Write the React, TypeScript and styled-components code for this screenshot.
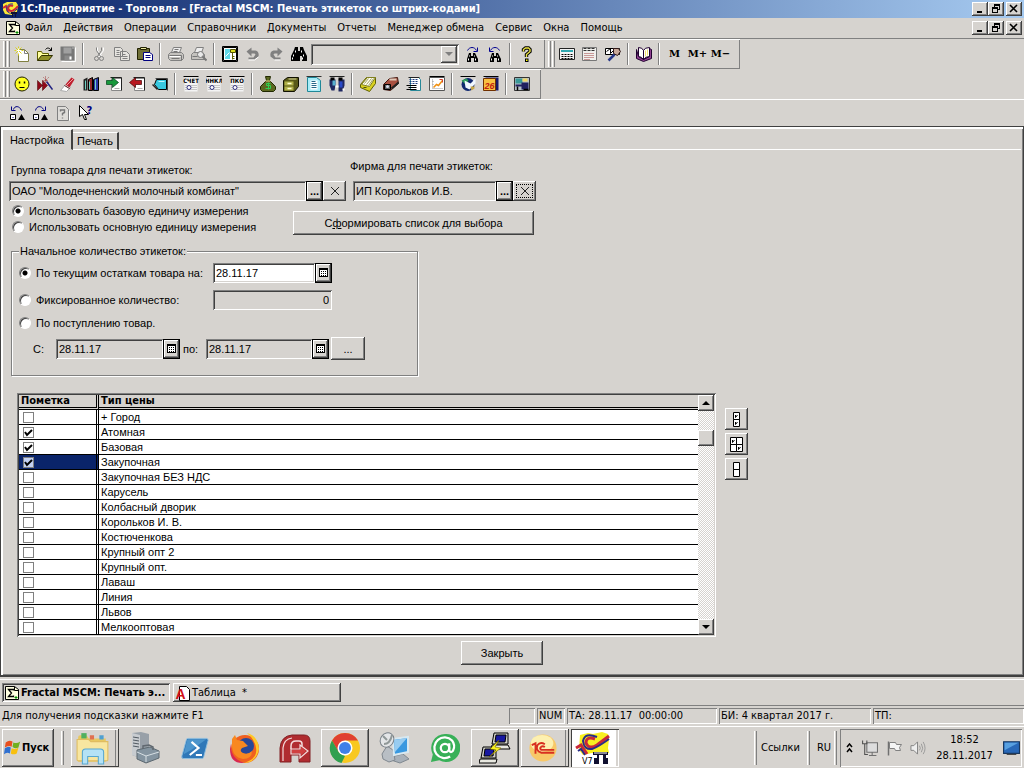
import React from "react";
import styled, { createGlobalStyle, css } from "styled-components";

const face = "#d6d3cf";
const shade = "#808080";
const dark = "#404040";
const uiFont = '"DejaVu Sans Condensed", "DejaVu Sans", sans-serif';
const formFont = '"Liberation Sans", Arial, sans-serif';

const raised = css`
  box-shadow: inset -1px -1px ${dark}, inset 1px 1px #fff, inset -2px -2px ${shade};
`;
const sunken = css`
  box-shadow: inset 1px 1px ${shade}, inset -1px -1px #fff, inset 2px 2px ${dark}, inset -2px -2px ${face};
`;
const thinSunken = css`
  box-shadow: inset 1px 1px ${shade}, inset -1px -1px #fff;
`;

const GlobalStyle = createGlobalStyle`
  * { box-sizing: border-box; }
  body { margin: 0; background: ${face}; color: #000; font: 11px/14px ${uiFont}; }
  button, input { font: inherit; color: inherit; margin: 0; padding: 0; border: 0; border-radius: 0; background: none; }
  svg { display: block; flex: none; }
`;

const Screen = styled.div`
  display: flex;
  flex-direction: column;
  min-height: 100vh;
`;

/* ---------- title and menu ---------- */

const TitleBar = styled.header`
  display: flex;
  align-items: center;
  height: 18px;
  padding: 0 2px;
  gap: 1px;
  background: linear-gradient(90deg, #0a246a, #a6caf0);
  color: #fff;
`;
const Title = styled.h1`
  flex: 1;
  margin: 0;
  font: bold 11px/16px ${uiFont};
  white-space: pre;
`;
const Captions = styled.div`
  display: flex;
`;
const CaptionButton = styled.button<{ $apart?: boolean }>`
  display: grid;
  place-items: center;
  width: 16px;
  height: 14px;
  margin-left: ${(p) => (p.$apart ? 2 : 0)}px;
  background: ${face};
  ${raised}
`;
const MenuBar = styled.nav`
  display: flex;
  align-items: center;
  height: 21px;
  padding: 0 2px 0 5px;
  border-bottom: 1px solid ${shade};
`;
const MenuItems = styled.div`
  display: flex;
  flex: 1;
  gap: 11px;
  padding-left: 4px;
`;
const MenuItem = styled.button`
  white-space: nowrap;
`;

/* ---------- toolbars ---------- */

const ToolRow = styled.div`
  display: flex;
`;
const ToolBar = styled.div`
  display: flex;
  align-items: center;
  height: 30px;
  padding: 0 8px 0 3px;
  box-shadow: inset 0 1px #fff, inset -1px -1px ${shade};
`;
const PlainBar = styled.div`
  display: flex;
  align-items: center;
  height: 27px;
  padding-left: 5px;
  border-top: 1px solid #fff;
`;
const Grip = styled.span`
  width: 7px;
  height: 26px;
  background: linear-gradient(90deg, #fff 1px, ${face} 1px 2px, ${shade} 2px 3px, ${face} 3px 4px, #fff 4px 5px, ${face} 5px 6px, ${shade} 6px);
`;
const ToolButton = styled.button`
  display: grid;
  place-items: center;
  width: 23px;
  height: 23px;
`;
const MemoryButton = styled(ToolButton)`
  font: bold 10px/14px "DejaVu Serif", serif;
  white-space: nowrap;
`;
const Divider = styled.span`
  width: 2px;
  height: 22px;
  margin: 0 3px;
  border-left: 1px solid ${shade};
  border-right: 1px solid #fff;
`;
const SearchCombo = styled.div`
  display: flex;
  width: 148px;
  height: 21px;
  margin: 0 1px;
  padding: 2px;
  ${sunken}
`;
const SearchInput = styled.input`
  flex: 1;
  min-width: 0;
`;
const DropButton = styled.button`
  display: grid;
  place-items: center;
  width: 16px;
  ${raised}
`;

/* ---------- document window ---------- */

const Panel = styled.main`
  display: flex;
  flex-direction: column;
  flex: 1;
  padding: 1px 2px 2px 2px;
  font: 11px/14px ${formFont};
  border: solid ${dark};
  border-width: 1px 1px 2px 1px;
  box-shadow: inset 2px 2px #fff, inset -1px -1px ${shade};
`;
const Tabs = styled.div`
  display: flex;
  align-items: flex-end;
  height: 22px;
`;
const Tab = styled.button<{ $active?: boolean }>`
  height: ${(p) => (p.$active ? 21 : 18)}px;
  width: ${(p) => (p.$active ? 70 : 46)}px;
  text-align: center;
  border-right: 2px solid ${dark};
  border-bottom: 1px solid ${(p) => (p.$active ? "transparent" : "#fff")};
  border-top: 1px solid #fff;
  white-space: nowrap;
`;
const TabRule = styled.span`
  flex: 1;
  border-bottom: 1px solid #fff;
`;
const Body = styled.div`
  display: flex;
  flex-direction: column;
  flex: 1;
  padding: 8px 6px;
`;
const Pickers = styled.div`
  display: flex;
  align-items: flex-end;
  gap: 4px;
`;
const Picker = styled.div<{ $w: number; $gap: number }>`
  display: flex;
  flex-direction: column;
  gap: ${(p) => p.$gap}px;
  width: ${(p) => p.$w}px;
`;
const Label = styled.label<{ $inset?: number }>`
  padding-left: ${(p) => p.$inset ?? 0}px;
  line-height: 16px;
  white-space: nowrap;
`;
const FieldRow = styled.div<{ $lead?: number }>`
  display: flex;
  height: 20px;
  padding-left: ${(p) => p.$lead ?? 0}px;
`;
const Field = styled.input<{ $white?: boolean; $right?: boolean }>`
  flex: 1;
  min-width: 0;
  padding: 0 3px;
  text-align: ${(p) => (p.$right ? "right" : "left")};
  background: ${(p) => (p.$white ? "#fff" : face)};
  ${sunken}
`;
const DotsButton = styled.button`
  width: 17px;
  font-weight: bold;
  border: 1px solid #000;
  ${raised}
`;
const PickButton = styled.button`
  display: grid;
  place-items: center;
  width: 17px;
  border: 1px solid #000;
  ${raised}
`;
const ClearButton = styled.button<{ $focus?: boolean }>`
  display: grid;
  place-items: center;
  width: 23px;
  padding: 2px;
  ${raised}
  outline: ${(p) => (p.$focus ? "1px dotted #000" : "none")};
  outline-offset: -4px;
`;
const PushButton = styled.button<{ $w: number; $h: number }>`
  width: ${(p) => p.$w}px;
  height: ${(p) => p.$h}px;
  ${raised}
`;
const UnitRow = styled.div`
  display: flex;
  align-items: flex-end;
  padding: 2px 0 0 3px;
`;
const Units = styled.div`
  display: flex;
  flex-direction: column;
  width: 281px;
`;
const Choice = styled.label`
  display: flex;
  align-items: center;
  gap: 5px;
  height: 16px;
  white-space: nowrap;
`;
const Radio = styled.input.attrs({ type: "radio" })`
  appearance: none;
  flex: none;
  width: 12px;
  height: 12px;
  border: 1px solid;
  border-color: ${shade} #fff #fff ${shade};
  border-radius: 50%;
  background: #fff;
  box-shadow: inset 1px 1px ${dark};
  &:checked {
    background: radial-gradient(circle, #000 2px, #fff 3px);
  }
`;
const Group = styled.fieldset`
  width: 407px;
  margin: 9px 2px 0;
  padding: 1px 7px 15px;
  border: 1px solid ${shade};
  box-shadow: 1px 1px #fff, inset 1px 1px #fff;
`;
const Legend = styled.legend`
  padding: 0 1px;
  line-height: 14px;
  background: ${face};
`;
const QuantityRow = styled.div`
  display: grid;
  grid-template-columns: 194px 119px;
  align-items: center;
  height: 27px;
`;
const ArrivalRow = styled.div`
  padding: 2px 0 6px;
`;
const PeriodRow = styled.div`
  display: flex;
  align-items: center;
  gap: 2px;
  padding-left: 13px;
`;
const PeriodWord = styled.label`
  width: 22px;
  padding-left: 1px;
`;
const DateField = styled(FieldRow)<{ $w: number }>`
  width: ${(p) => p.$w}px;
`;

/* ---------- price table ---------- */

const Prices = styled.div`
  display: flex;
  gap: 9px;
  padding: 17px 0 0 8px;
`;
const PriceFrame = styled.div`
  display: flex;
  flex: 0 1 699px;
  padding: 2px;
  background: #fff;
  ${sunken}
`;
const PriceTable = styled.table`
  flex: 1;
  border-collapse: separate;
  border-spacing: 0;
  table-layout: fixed;
`;
const HeadCell = styled.th<{ $mark?: boolean }>`
  width: ${(p) => (p.$mark ? "80px" : "auto")};
  height: 15px;
  padding: 0 2px;
  text-align: left;
  font: bold 11px/12px ${uiFont};
  background: ${face};
  border-right: ${(p) => (p.$mark ? "3px double #000" : "0")};
  border-bottom: 3px double #000;
`;
const MarkCell = styled.td<{ $current?: boolean }>`
  height: 15px;
  padding: 0 4px;
  background: ${(p) => (p.$current ? "#0a246a" : "#fff")};
  border-right: 3px double #000;
  border-bottom: 1px solid #000;
`;
const NameCell = styled.td`
  height: 15px;
  padding: 0 2px;
  line-height: 13px;
  border-bottom: 1px solid #000;
`;
const Tick = styled.input.attrs({ type: "checkbox" })<{ $current?: boolean }>`
  appearance: none;
  display: block;
  width: 11px;
  height: 11px;
  border: 1px solid ${shade};
  background: ${(p) => (p.$current ? "#c4d2f4" : "#fff")};
  &:not(:checked) + svg {
    display: none;
  }
`;
const TickBox = styled.span`
  position: relative;
  display: block;
  width: 11px;
  svg {
    position: absolute;
    inset: 0;
    pointer-events: none;
  }
`;
const ScrollTrack = styled.div`
  display: flex;
  flex-direction: column;
  width: 16px;
  background: repeating-conic-gradient(#fff 0 25%, ${face} 0 50%) 0 0 / 2px 2px;
`;
const ScrollButton = styled.button`
  display: grid;
  place-items: center;
  width: 16px;
  height: 16px;
  background: ${face};
  ${raised}
`;
const ScrollGap = styled.span<{ $grow: number }>`
  flex: ${(p) => p.$grow};
`;
const SideButtons = styled.div`
  display: flex;
  flex-direction: column;
  gap: 3px;
  padding-top: 15px;
`;
const SideButton = styled.button`
  display: grid;
  place-items: center;
  width: 23px;
  height: 22px;
  ${raised}
`;
const Footer = styled.div`
  display: flex;
  justify-content: center;
  padding: 4px 20px 0 0;
`;

/* ---------- window list and status bar ---------- */

const WindowBar = styled.div`
  display: flex;
  gap: 3px;
  height: 27px;
  margin-top: 2px;
  padding: 3px 2px;
  border-top: 1px solid #fff;
  border-bottom: 1px solid ${shade};
`;
const WindowButton = styled.button<{ $active?: boolean }>`
  display: flex;
  align-items: center;
  gap: 1px;
  width: 168px;
  padding-left: 2px;
  white-space: pre;
  font-weight: ${(p) => (p.$active ? "bold" : "normal")};
  ${(p) => (p.$active ? sunken : raised)}
`;
const StatusBar = styled.div`
  display: flex;
  align-items: center;
  gap: 2px;
  height: 20px;
`;
const Hint = styled.span`
  flex: 1;
  padding-left: 2px;
`;
const StatusCell = styled.span<{ $w: number }>`
  width: ${(p) => p.$w}px;
  height: 16px;
  padding: 1px 2px;
  white-space: pre;
  ${thinSunken}
`;

/* ---------- system task bar ---------- */

const TaskBar = styled.footer`
  display: flex;
  align-items: center;
  height: 42px;
  padding: 1px 2px 1px;
  border-top: 1px solid #fff;
`;
const StartButton = styled.button`
  display: flex;
  align-items: center;
  gap: 1px;
  width: 52px;
  height: 38px;
  padding-left: 2px;
  font-weight: bold;
  ${raised}
`;
const TaskGrip = styled.span<{ $gap: number }>`
  width: 3px;
  height: 34px;
  margin: 0 ${(p) => p.$gap}px;
  border-left: 1px solid #fff;
  border-right: 1px solid ${shade};
`;
const Apps = styled.div`
  display: flex;
  flex: 1;
  gap: 2px;
`;
const AppButton = styled.button<{ $state?: "open" | "stack" | "active" }>`
  display: grid;
  place-items: center;
  width: 48px;
  height: 38px;
  ${(p) => p.$state === "open" && raised}
  ${(p) =>
    p.$state === "stack" &&
    css`
      padding-right: 5px;
      box-shadow: inset -1px -1px ${dark}, inset 1px 1px #fff, inset -3px 0 ${face}, inset -4px 0 ${shade};
    `}
  ${(p) =>
    p.$state === "active" &&
    css`
      padding-right: 4px;
      box-shadow: inset 1px 1px ${dark}, inset -1px -1px #fff, inset -3px 0 ${face};
      background: #fff;
    `}
`;
const TrayWord = styled.span`
  white-space: nowrap;
`;
const Tray = styled.div`
  display: flex;
  align-items: center;
  gap: 8px;
  width: 182px;
  height: 38px;
  padding: 0 2px 0 6px;
  ${thinSunken}
`;
const Clock = styled.time`
  flex: 1;
  text-align: center;
  line-height: 16px;
  white-space: nowrap;
`;

/* ---------- icons ---------- */

/* Small 16-unit icons are shifted by half a unit so that 1px strokes stay sharp. */
const Px = ({ children, s = 16, v = 16 }: { children: React.ReactNode; s?: number; v?: number }) => (
  <svg width={s} height={s} viewBox={`0 0 ${v} ${v}`} aria-hidden>
    {v === 16 ? <g transform="translate(0.5 0.5)">{children}</g> : children}
  </svg>
);

const Logo = () => (
  <Px s={17} v={17}>
    <path d="M1 3l4-2h9l2 3-1 7-5 3-7-1-2-4z" fill="#f8e838" />
    <path d="M1 7l3-2 2 6M11 5C7 3 5 7 7 9s5 1 9-4" fill="none" stroke="#d02838" strokeWidth="2" />
    <path d="M11 3C5 2 3 8 6 11s6 0 9-3" fill="none" stroke="#303890" />
    <path d="M9 11h6v2h-1v3h-1v-3h-2v3h-1v-3H9z" fill="#101030" />
  </Px>
);
const SigmaDoc = () => (
  <Px>
    <path d="M1 1h9l4 3v10H1z" fill="#ffffe0" stroke="#000" />
    <path d="M10 1v4h4" fill="none" stroke="#000" />
    <path d="M9 5V4H4l3 3.500L4 11h5v-1" fill="none" stroke="#000" strokeWidth="1.300" />
    <path d="M10 12h3M11.500 10.500v3" stroke="#080" />
  </Px>
);
const icons: Record<string, React.ReactNode> = {
  newDoc: (
    <>
      <path d="M4 3h6l4 4v8H4z" fill="#fff" stroke="#808040" />
      <path d="M10 3v4h4" fill="none" stroke="#808080" />
      <path d="M4 0v9M0 4h9M1 1l6 6M7 1L1 7" stroke="#d8d020" />
      <path d="M4 2v5M2 4h5" stroke="#fff" />
    </>
  ),
  open: (
    <>
      <path d="M0 14V5h4l1 2h6v3" fill="#ffffa0" stroke="#606000" />
      <path d="M0 14l4-5h11l-4 5z" fill="#909028" stroke="#303000" />
      <path d="M8 3c2-2.500 4-1.500 6 1M14 1v3h-3" fill="none" stroke="#000" />
    </>
  ),
  save: (
    <>
      <path d="M0 0h14v14H0z" fill="#777" />
      <path d="M3 1h8v6H3z" fill="#a0a0a0" />
      <path d="M4 9h7v5H4z" fill="#8a8a8a" />
      <path d="M9 10h2v3H9zM12 1h1v1h-1z" fill="#fff" />
      <path d="M1 15h14V1" stroke="#fff" fill="none" />
    </>
  ),
  cut: (
    <>
      <path d="M6 1v3l5 7M12 1v3l-5 7" stroke="#fff" fill="none" />
      <path d="M5 1v3l4 6M10 1v3L6 10" fill="none" stroke="#808080" />
      <circle cx="5" cy="12" r="2" fill="none" stroke="#808080" />
      <circle cx="10" cy="12" r="2" fill="none" stroke="#808080" />
    </>
  ),
  copy: (
    <>
      <path d="M0 1h6l2 2v7H0zM6 5h6l3 3v6H6z" fill="#e6e4e0" stroke="#808080" />
      <path d="M2 4h3M2 6h3M2 8h3M8 8h3M8 10h5M8 12h5" stroke="#808080" />
    </>
  ),
  paste: (
    <>
      <path d="M0 2h12v11H0z" fill="#707038" stroke="#202000" />
      <path d="M3 3h6V1H3z" fill="#e8e8a0" stroke="#202000" />
      <path d="M6 6h6l3 2v6H6z" fill="#fff" stroke="#000080" />
      <path d="M8 9h5M8 11h5" stroke="#000080" />
    </>
  ),
  print: (
    <>
      <path d="M5 1h8l-2 5H3z" fill="#eee" stroke="#808080" />
      <path d="M2 6h11l2 2v4l-2 2H2l-2-2V8z" fill="#c4c2be" stroke="#808080" />
      <path d="M1 9h12v5M3 12h8M6 3h4M5 5h4" fill="none" stroke="#777" />
      <path d="M1 10h11" stroke="#fff" />
    </>
  ),
  preview: (
    <>
      <path d="M5 1h7l-2 5H3z" fill="#eee" stroke="#808080" />
      <path d="M2 6h9l2 2v5H0V8z" fill="#c4c2be" stroke="#808080" />
      <circle cx="9" cy="8" r="3" fill="#e8e8e8" stroke="#777" />
      <path d="M11 10l4 4" stroke="#777" strokeWidth="2" />
      <path d="M1 10h5" stroke="#777" />
    </>
  ),
  key: (
    <>
      <path d="M0 0h15v15H0z" fill="#fff" stroke="#000" />
      <path d="M1 1h13v13H1z" fill="none" stroke="#000" />
      <path d="M2.500 2.500h5v10h-5z" fill="#60d8e8" />
      <path d="M8 3h5v3H8z" fill="#e0e020" stroke="#505000" />
      <path d="M10 6v7M10 10h2M10 12h2" stroke="#606000" />
      <path d="M3 10l4-4" stroke="#fff" />
    </>
  ),
  undo: (
    <>
      <path d="M1 5l5-4v3h4q4 1 3 6l-4 3H3v-2h5l2-3-1-1H6v3z" fill="#808080" />
      <path d="M3 13.500h6l4-3" fill="none" stroke="#fff" />
    </>
  ),
  redo: (
    <>
      <path d="M14 5L9 1v3H5Q1 5 2 10l4 3h6v-2H7L5 8l1-1h3v3z" fill="#808080" />
      <path d="M6 13.500h6" stroke="#fff" />
    </>
  ),
  find: (
    <>
      <path d="M3.500.5h3v4h2v-4h3l1 3 3 6v5h-5v-5h-2v5h-5-4v-5l3-6z" fill="#000" />
      <path d="M4 4v2M2 8v2M10 4v2M12 8v2M1 11v2M11 11v2" stroke="#fff" />
    </>
  ),
  findNext: (
    <>
      <path d="M4.500 6.500h2v3h2v-3h2l3 6v3h-4v-4h-3v4h-4v-3z" fill="#000" />
      <path d="M5 9v1M10 9v1M4 12v2M11 12v2" stroke="#fff" />
      <path d="M3 4c2-4 7-4 9 0M13 1v4H9" fill="none" stroke="#000090" />
    </>
  ),
  findPrev: (
    <>
      <path d="M4.500 6.500h2v3h2v-3h2l3 6v3h-4v-4h-3v4h-4v-3z" fill="#000" />
      <path d="M5 9v1M10 9v1M4 12v2M11 12v2" stroke="#fff" />
      <path d="M12 4C10 0 5 0 3 4M2 1v4h4" fill="none" stroke="#000090" />
    </>
  ),
  help: (
    <>
      <path d="M5 5V3l2-1.500h3L11.500 3v2L8 8v2.500" fill="none" stroke="#000" strokeWidth="3.400" />
      <path d="M5 5V3l2-1.500h3L11.500 3v2L8 8v2.500" fill="none" stroke="#e8e040" strokeWidth="1.400" />
      <path d="M6.500 12h3.500v3.500H6.500z" fill="#000" />
      <path d="M7.500 13h1.500v1.500H7.500z" fill="#ff0" />
    </>
  ),
  calc: (
    <>
      <path d="M0 2h15v11H0z" fill="#f4f4f4" stroke="#222" />
      <path d="M1.500 3.500h12v2h-12z" fill="#30a8b0" />
      <path d="M2 8h12M2 10h12M2 12h12" stroke="#000" strokeDasharray="2 1" />
    </>
  ),
  calendar: (
    <>
      <path d="M0 1h14v13H0z" fill="#f0efec" stroke="#777" />
      <path d="M1 2h12M1 4h12" stroke="#333" strokeDasharray="3 1" />
      <path d="M2 7h10M2 9h10M2 11h10M2 13h6" stroke="#a04040" strokeDasharray="1 1" />
    </>
  ),
  inspect: (
    <>
      <path d="M0 2h14v6H0z" fill="#fff" stroke="#000" />
      <path d="M1 5l4-3v5l4-4" fill="none" stroke="#000" />
      <path d="M8 2h5l2 3-3 4-4-2z" fill="#c8a898" stroke="#301818" />
      <path d="M3 14l6-6" stroke="#283888" strokeWidth="2.500" />
    </>
  ),
  book: (
    <>
      <path d="M0 3v9l7 3 8-3V3l-2-1v8l-6 3-5-3z" fill="#904090" stroke="#200030" />
      <path d="M2 1q4 0 5 3v9q-2-3-5-3zM7 4q1-3 6-3v9q-4 0-6 3z" fill="#fff" stroke="#200030" />
      <path d="M9 4v6M11 3v6" stroke="#f0e070" />
    </>
  ),
  smile: (
    <>
      <circle cx="7.500" cy="7.500" r="7" fill="#ffff20" stroke="#202000" />
      <path d="M5 5v2M10 5v2" stroke="#000" strokeWidth="1.500" />
      <path d="M5 11h5" stroke="#000" />
    </>
  ),
  wand: (
    <>
      <path d="M0 4l5 5-5 5zM5 4l5 5-5 5z" fill="#900818" stroke="#400" strokeWidth=".5" />
      <path d="M9 5l6 8" stroke="#202080" strokeWidth="1.500" />
      <path d="M8 0v7M5 4h6M6 1l5 5M11 1L6 6" stroke="#a04040" strokeDasharray="1 1" />
    </>
  ),
  marker: (
    <>
      <path d="M0 14l5-6 5 3-4 4z" fill="#fff" stroke="#aaa" />
      <path d="M5 8l6-7 3 2-5 8z" fill="#c02030" />
      <path d="M6 9l7-7" stroke="#f0a0a0" />
      <path d="M4 9l5 3" stroke="#501010" />
    </>
  ),
  books: (
    <>
      <path d="M0 3l4-2v13H0z" fill="#222" />
      <path d="M5 3l4-2v13H5z" fill="#902828" stroke="#000" />
      <path d="M10 3l5-2v13h-5z" fill="#2838a8" stroke="#000" />
      <path d="M2 4v9M6 5v8M12 3v10" stroke="#70d0c0" />
    </>
  ),
  docIn: (
    <>
      <path d="M5 2h10v12H5z" fill="#fff" stroke="#888" />
      <path d="M15 1v13M4 1h11" stroke="#222" />
      <path d="M0 4h6V1l6 5-6 5V8H0z" fill="#18983c" stroke="#004018" strokeWidth=".7" />
      <path d="M8 12h5" stroke="#aaa" />
    </>
  ),
  docOut: (
    <>
      <path d="M5 2h10v12H5z" fill="#fff" stroke="#888" />
      <path d="M15 1v13M4 1h11" stroke="#222" />
      <path d="M12 4H6V1L0 6l6 5V8h6z" fill="#b81820" stroke="#400" strokeWidth=".7" />
      <path d="M8 12h5" stroke="#aaa" />
    </>
  ),
  shape: (
    <>
      <path d="M4 3h10v10H6L2 8z" fill="#38c8e0" stroke="#000" />
      <path d="M6 5h6" stroke="#c0f4ff" />
      <path d="M0 8l5 5" stroke="#222" strokeWidth="1.500" />
      <path d="M3 2h12v12" fill="none" stroke="#444" />
    </>
  ),
  bag: (
    <>
      <path d="M5 0h5L9 4l6 6v3l-2 2H2l-2-2v-3l6-6z" fill="#5c6820" stroke="#202800" />
      <path d="M10 7H6v2h4v3H5M8 6v7" fill="none" stroke="#30d050" />
      <path d="M5 4.500h5" stroke="#e0d080" />
    </>
  ),
  safe: (
    <>
      <path d="M0 4l4-3h11v9l-4 5H0z" fill="#585818" stroke="#101000" />
      <path d="M1 5h9v4H1zM1 10h9v4H1z" fill="#b0b048" />
      <path d="M4 7h4M4 12h4" stroke="#ffffd0" strokeWidth="1.500" />
      <path d="M5 2.500h8" stroke="#e0e0a0" />
    </>
  ),
  cyanDoc: (
    <>
      <path d="M1 1h9l4 3v11H1z" fill="#a8ecf8" stroke="#208898" />
      <path d="M4 4h7v9H4z" fill="#fff" />
      <path d="M5 5h4M5 7h5M5 9h5M5 11h5" stroke="#286888" />
      <path d="M0 0h15" stroke="#333" />
    </>
  ),
  people: (
    <>
      <path d="M0 3h6v6l-1 5H2L0 9zM9 3h6v6l-2 6H9z" fill="#202860" />
      <path d="M1 1h4v3H1zM9 1h4v3H9z" fill="#000" />
      <path d="M3 4h3v5H3z" fill="#58b0d0" />
      <path d="M10 5h3v6h-3z" fill="#2848c8" />
      <path d="M6 9h3v2H6zM13 12h2v2h-2z" fill="#fff" />
      <path d="M0 0h15" stroke="#222" />
    </>
  ),
  yellowBox: (
    <>
      <path d="M0 8l6-7h9v6l-6 8-9-4z" fill="#d8d020" stroke="#606000" />
      <path d="M1 8l6-7h8L9 10z" fill="#fffff0" stroke="#808020" />
      <path d="M4 7l4-5M6 8l5-6M8 9l5-7" stroke="#a0a060" />
      <path d="M3 11h3" stroke="#505010" />
    </>
  ),
  train: (
    <>
      <path d="M0 8l6-6 8-1 1 6-8 7-7-1z" fill="#a85040" stroke="#401810" />
      <path d="M1 8h6v5H1z" fill="#606060" stroke="#000" />
      <path d="M6 3l7 0" stroke="#e0c8b8" strokeWidth="2" />
      <path d="M8 12l7-6" stroke="#222" strokeWidth="2" />
      <circle cx="4" cy="10" r="1.500" fill="#d8e0f0" />
    </>
  ),
  report: (
    <>
      <path d="M4 1h8l2 2v11H4z" fill="#fff" stroke="#288898" />
      <path d="M3 3h8M3 5h8M3 7h8" stroke="#204080" strokeDasharray="2 1" />
      <path d="M0 9h10M2 11h8M0 13h10" stroke="#000" />
      <path d="M2 1h11" stroke="#222" />
    </>
  ),
  chart: (
    <>
      <path d="M0 1h15v13H0z" fill="#fff" stroke="#555" />
      <path d="M0 0h15" stroke="#000" />
      <path d="M3 3v9h10M3 5h2M3 8h2" fill="none" stroke="#999" strokeDasharray="1 1" />
      <path d="M4 11l3-3 2 1 4-5" fill="none" stroke="#f09010" strokeWidth="1.500" />
      <path d="M10 3h3v3" fill="none" stroke="#d04030" />
    </>
  ),
  globe: (
    <>
      <path d="M0 0h15" stroke="#000" />
      <circle cx="7.500" cy="8" r="6.500" fill="#102870" />
      <path d="M1 4l5-2 2 2-3 4z" fill="#289858" />
      <path d="M4 4l6 3 5-5v5l-6 6-4-2z" fill="#f0f8ff" />
      <path d="M10 10h4v2l-3 2z" fill="#c8a848" />
    </>
  ),
  day26: (
    <>
      <path d="M2 1h13v13H2z" fill="#181868" />
      <path d="M0 2h12v12H0z" fill="#f8c040" stroke="#703000" />
      <path d="M0 0h15" stroke="#000" />
      <text x="1" y="12" fontSize="9" fontWeight="bold" fontStyle="italic" fill="#c02010" fontFamily="Liberation Sans">26</text>
    </>
  ),
  desk: (
    <>
      <path d="M0 1h15v13H0z" fill="#b8c0c8" stroke="#333" />
      <path d="M1 2h7v5H1z" fill="#389898" />
      <path d="M8 2h5v3H8z" fill="#f0d868" />
      <path d="M7 6h7v7H7zM1 8h6v2H1z" fill="#202060" />
      <path d="M3 10v4M9 13h5" stroke="#000" strokeWidth="1.500" />
    </>
  ),
  question: (
    <>
      <path d="M2 1h8l3 3v11H2z" fill="#dedcd8" stroke="#808080" />
      <path d="M5 6V4.500h4V7L7 8v2M7 12v1" fill="none" stroke="#777" strokeWidth="1.400" />
      <path d="M14 5v10" fill="none" stroke="#fff" />
    </>
  ),
  whatsThis: (
    <>
      <path d="M1 0v11l3-2 2 5h2L6 9h4z" fill="#fff" stroke="#000" />
      <text x="8" y="8" fontSize="10" fontWeight="bold" fill="#000080" fontFamily="DejaVu Sans">?</text>
    </>
  ),
  expand: (
    <>
      <path d="M1 9h5v5H1z" fill="#fff" stroke="#000" />
      <path d="M12 8.500l3.500 6H8.500z" fill="#000" />
      <path d="M12 5C10 0 5 0 4 4M2 1v4h4M3 12h1" fill="none" stroke="#000080" />
    </>
  ),
  collapse: (
    <>
      <path d="M1 9h5v5H1z" fill="#fff" stroke="#000" />
      <path d="M12 8.500l3.500 6H8.500z" fill="#000" />
      <path d="M3 5C4 0 9 0 11 4M13 1v4H9M3 12h1" fill="none" stroke="#000080" />
    </>
  ),
};

const FormIcon = ({ word }: { word: string }) => (
  <Px>
    <path d="M1 1h13v14H1z" fill="#f4f4f4" />
    <path d="M0 0h15" stroke="#000" />
    <text x="7.500" y="6" textAnchor="middle" fontSize="6" fontWeight="bold" fontFamily="DejaVu Sans Condensed">{word}</text>
    <path d="M2 9h11M2 11h11M2 13h11" stroke="#999" strokeDasharray="1 1" />
    <circle cx="5.500" cy="11" r="2" fill="#fff" stroke="#303080" />
  </Px>
);

const Tool = ({ name, label }: { name: string; label: string }) => (
  <ToolButton aria-label={label}>
    <Px>{icons[name]}</Px>
  </ToolButton>
);

const CaptionSet = () => (
  <Captions>
    <CaptionButton aria-label="Свернуть">
      <svg width="10" height="10" shapeRendering="crispEdges"><path d="M2 7h5v2H2z" /></svg>
    </CaptionButton>
    <CaptionButton aria-label="Восстановить">
      <svg width="10" height="10" shapeRendering="crispEdges"><path d="M3 0h6v6H7V5h1V2H4v1H3zM1 3h6v6H1zM2 5v3h4V5z" fillRule="evenodd" /></svg>
    </CaptionButton>
    <CaptionButton $apart aria-label="Закрыть окно">
      <svg width="10" height="10"><path d="M1 1l7 7M8 1L1 8" stroke="#000" strokeWidth="1.600" /></svg>
    </CaptionButton>
  </Captions>
);

const Cross = () => (
  <svg width="10" height="10"><path d="M1 1l8 8M9 1L1 9" stroke="#222" /></svg>
);
const Grid = () => (
  <svg width="11" height="11" shapeRendering="crispEdges">
    <path d="M1 1h9v9H1z" fill="#fff" />
    <path d="M1 1h9v9H1zM2 3v6h7V3z" fillRule="evenodd" />
    <path d="M3 4h1v1H3zM5 4h1v1H5zM7 4h1v1H7zM3 6h1v1H3zM5 6h1v1H5zM7 6h1v1H7zM3 8h1v1H3zM5 8h1v1H5zM7 8h1v1H7z" />
  </svg>
);

const DateBox = ({ id, width, white, label }: { id: string; width: number; white?: boolean; label?: string }) => (
  <DateField $w={width}>
    <Field id={id} $white={white} defaultValue="28.11.17" aria-label={label} />
    <PickButton aria-label="Выбрать дату"><Grid /></PickButton>
  </DateField>
);

const MarkGlyph = ({ columns, checks }: { columns: number; checks: string }) => (
  <svg width={columns * 6 + 2} height="15">
    {Array.from({ length: columns }, (_, c) => (
      <path key={c} d={`M${c * 6 + 0.5} .5h6v7h-6zM${c * 6 + 0.5} 7.500h6v7h-6z`} fill="#fff" stroke="#000" />
    ))}
    <path d={checks} fill="none" stroke="#000" />
  </svg>
);

const prices: [string, boolean][] = [
  ["+ Город", false],
  ["Атомная", true],
  ["Базовая", true],
  ["Закупочная", true],
  ["Закупочная БЕЗ НДС", false],
  ["Карусель", false],
  ["Колбасный дворик", false],
  ["Корольков И. В.", false],
  ["Костюченкова", false],
  ["Крупный опт 2", false],
  ["Крупный опт.", false],
  ["Лаваш", false],
  ["Линия", false],
  ["Львов", false],
  ["Мелкооптовая", false],
];
const menu = ["Файл", "Действия", "Операции", "Справочники", "Документы", "Отчеты", "Менеджер обмена", "Сервис", "Окна", "Помощь"];

/* ---------- application icons of the task bar ---------- */

const WindowsFlag = () => (
  <Px s={17} v={20}>
    <path d="M2 4q4-3 8-1L9 9Q5 7 1 10z" fill="#e85020" />
    <path d="M11 4q4 2 8-1l-2 7q-4 2-7-1z" fill="#70b020" />
    <path d="M1 11q4-3 7-1l-1 7q-4-2-7 1z" fill="#3070d0" />
    <path d="M9 11q4 2 8-1l-2 7q-4 2-7 0z" fill="#f8c010" />
  </Px>
);
const Explorer = () => (
  <Px s={34} v={32}>
    <path d="M2 6q0-2 2-2h6l2 3h16v22H2z" fill="#e8c860" />
    <path d="M5 2h5v5H5z" fill="#50b060" /><path d="M13 4h4v4h-4z" fill="#e07050" /><path d="M22 4h4v4h-4z" fill="#50a0d0" />
    <path d="M1 8h11l2 2h16v17q0 1-1 1H2q-1 0-1-1z" fill="#f8e6a0" stroke="#e0bc60" />
    <path d="M6 31V20q0-3 3-3h14q3 0 3 3v11h-5v-7H11v7z" fill="#b4e2f6" stroke="#58a8d0" />
  </Px>
);
const Server = () => (
  <Px s={32} v={32}>
    <path d="M3 1l9-1 8 2v20l-9 4-8-3z" fill="#98a0a8" />
    <path d="M3 1l8 2v23l-8-3z" fill="#c8ccd0" />
    <path d="M4 5l6 1M4 8l6 1M4 11l6 1M4 14l6 1" stroke="#505860" />
    <path d="M8 18l13-3 9 4v7l-13 5-9-4z" fill="#8494a0" stroke="#5c6870" />
    <path d="M8 20l9 4 13-4M17 24v6" fill="none" stroke="#d8e0e4" />
    <path d="M14 17v-3l6-1 4 2v3" fill="none" stroke="#606870" strokeWidth="1.500" />
  </Px>
);
const PowerShell = () => (
  <Px s={28} v={32}>
    <path d="M8 5h21q2 0 2 2l-5 19q0 2-2 2H3q-3 0-2-3L6 7q0-2 2-2z" fill="#3078b8" stroke="#90c0e0" />
    <path d="M8 6h21L12 18l-9 5L7 7z" fill="#60a8d8" opacity=".6" />
    <path d="M12 9l8 7-10 8M17 24h7" fill="none" stroke="#fff" strokeWidth="2.500" />
  </Px>
);
const Firefox = () => (
  <Px s={32} v={32}>
    <circle cx="16" cy="17" r="14" fill="#f06020" />
    <path d="M18 1q11 3 12 16-3 14-15 14 14-4 12-15-1-8-9-15z" fill="#ffc828" />
    <circle cx="17" cy="14" r="8" fill="#284898" />
    <path d="M3 7l3-4 2 5 6 1 5 5-6 2q-3 3 1 5 5 2 9-2 0 8-9 8Q3 25 3 13z" fill="#f88820" />
    <path d="M2 12q-1 14 13 19Q1 32 1 17z" fill="#d82850" />
  </Px>
);
const RedA = () => (
  <Px s={32} v={32}>
    <path d="M1 30V16Q2 4 13 3h12q6 0 6 6v21H20v-7h-8v7z" fill="#b02c30" stroke="#802024" />
    <path d="M12 17v-3q0-5 5-5h3q3 0 3 3v2" fill="none" stroke="#f4dcdc" strokeWidth="1.500" />
    <path d="M4 29V16Q5 7 13 6M12 17h9v-4l8 6-8 7v-4h-9z" fill="none" stroke="#f4dcdc" strokeWidth="1.200" />
    <path d="M13 18h9v-3l5 4-5 4v-2h-9z" fill="#d04040" />
  </Px>
);
const Chrome = () => (
  <Px s={32} v={32}>
    <circle cx="16" cy="16" r="15" fill="#f8c820" />
    <path d="M3 8.500A15 15 0 0 1 29 8.500H16L9.500 20z" fill="#e04030" />
    <path d="M3 8.500l7 12 6 3.500-3.500 7A15 15 0 0 1 3 8.500z" fill="#30a050" />
    <circle cx="16" cy="16" r="7.500" fill="#fff" /><circle cx="16" cy="16" r="6" fill="#4080e8" />
  </Px>
);
const Remote = () => (
  <Px s={32} v={32}>
    <path d="M16 24l8-2 6 5-9 4-9-3z" fill="#a8b0b8" stroke="#808890" />
    <path d="M3 22l5-8 6 4 2 10-6 2-6-3z" fill="#b8bec4" stroke="#808890" />
    <path d="M14 7l15-2v15l-14 3z" fill="#3898e0" stroke="#d8e8f0" strokeWidth="2" />
    <path d="M15 8l13-2-12 14z" fill="#98ccf0" />
    <ellipse cx="8" cy="8" rx="6.500" ry="7.500" fill="#e4e6e8" stroke="#788088" transform="rotate(35 8 8)" />
    <path d="M5 12q6 0 8-9M8 8l-4-4" fill="none" stroke="#909898" strokeWidth="2" />
  </Px>
);
const AtMail = () => (
  <Px s={30} v={32}>
    <path d="M16 1a15 15 0 1 1-6 28L1 31l2-8A15 15 0 0 1 16 1z" fill="#38b058" />
    <circle cx="16" cy="16" r="4.500" fill="none" stroke="#fff" strokeWidth="2.400" />
    <path d="M20.500 11v7q1 4 4 1 3-6-1-11a11 11 0 1 0-2 17" fill="none" stroke="#fff" strokeWidth="2.400" />
  </Px>
);
const Putty = () => (
  <Px s={32} v={32}>
    <path d="M15 1h14v11H13zM4 15h13v11H2z" fill="#d0d0c8" stroke="#000" />
    <path d="M17 3h10l-1 7H16zM6 17h9l-1 7H5z" fill="#1818a0" stroke="#000" />
    <path d="M13 13h16l2 4H12zM1 27h17l-1 4H0z" fill="#e8e8e0" stroke="#000" />
    <path d="M20 8l-9 9 6 1-7 7 12-9-6-1z" fill="#f8f020" stroke="#706000" strokeWidth=".6" />
  </Px>
);
const OneC = () => (
  <Px s={30} v={32}>
    <circle cx="16" cy="16" r="14.500" fill="#f8c868" /><ellipse cx="15" cy="11" rx="12" ry="9" fill="#fdf0b0" />
    <path d="M4 13l4-2v11M18 12q-5-3-8 1-2 6 4 8h14M18 15q-3-2-5 1 0 2 2 2h13" fill="none" stroke="#d83020" strokeWidth="2" />
  </Px>
);
const OneC7 = () => (
  <svg width="36" height="34" viewBox="0 0 36 34" aria-hidden>
    <path d="M5 4l8-2 5 1 9-2 6 2 1 5-1 9 1 5-9 1-8-1-9 2-4-5z" fill="#f8f020" />
    <path d="M1 17l5-3 6 9M20 8q-9-3-9 4 3 7 11 2L34 5" fill="none" stroke="#c82838" strokeWidth="3" />
    <path d="M22 6q-12-5-14 4 1 9 9 8 6-2 17-10M3 20l3-2 4 6" fill="none" stroke="#282c88" strokeWidth="2" />
    <path d="M18 21h15v3h-2v3h2v6h-5v-9h-4v9h-5v-6h3v-3h-4z" fill="#101030" />
    <path d="M19 22h13" stroke="#fff" />
    <text x="7" y="33" fontSize="8" fontFamily="DejaVu Sans">V7</text>
  </svg>
);

export default function App() {
  return (
    <Screen>
      <GlobalStyle />
      <TitleBar>
        <Logo />
        <Title>1С:Предприятие - Торговля - [Fractal MSCM: Печать этикеток со штрих-кодами]</Title>
        <CaptionSet />
      </TitleBar>
      <MenuBar>
        <SigmaDoc />
        <MenuItems>{menu.map((m) => <MenuItem key={m}>{m}</MenuItem>)}</MenuItems>
        <CaptionSet />
      </MenuBar>

      <ToolRow>
        <ToolBar>
          <Grip />
          <Tool name="newDoc" label="Новый" />
          <Tool name="open" label="Открыть" />
          <Tool name="save" label="Сохранить" />
          <Divider />
          <Tool name="cut" label="Вырезать" />
          <Tool name="copy" label="Копировать" />
          <Tool name="paste" label="Вставить" />
          <Divider />
          <Tool name="print" label="Печать" />
          <Tool name="preview" label="Просмотр" />
          <Divider />
          <Tool name="key" label="Параметры" />
          <Tool name="undo" label="Отменить" />
          <Tool name="redo" label="Вернуть" />
          <Tool name="find" label="Найти" />
          <SearchCombo>
            <SearchInput aria-label="Строка поиска" />
            <DropButton aria-label="Показать список">
              <svg width="8" height="5"><path d="M0 0h8L4 4z" fill="#808080" /></svg>
            </DropButton>
          </SearchCombo>
          <Tool name="findNext" label="Найти далее" />
          <Tool name="findPrev" label="Найти ранее" />
          <Divider />
          <Tool name="help" label="Помощь" />
        </ToolBar>
        <ToolBar>
          <Grip />
          <Tool name="calc" label="Калькулятор" />
          <Tool name="calendar" label="Календарь" />
          <Tool name="inspect" label="Табло" />
          <Divider />
          <Tool name="book" label="Описание" />
          <Divider />
          <MemoryButton>M</MemoryButton>
          <MemoryButton>M+</MemoryButton>
          <MemoryButton>M−</MemoryButton>
        </ToolBar>
      </ToolRow>
      <ToolRow>
        <ToolBar>
          <Grip />
          <Tool name="smile" label="Советы" />
          <Tool name="wand" label="Быстрый старт" />
          <Tool name="marker" label="Пометка" />
          <Tool name="books" label="Журналы" />
          <Tool name="docIn" label="Приход" />
          <Tool name="docOut" label="Расход" />
          <Tool name="shape" label="Возврат" />
          <Divider />
          <ToolButton aria-label="Счет"><FormIcon word="СЧЕТ" /></ToolButton>
          <ToolButton aria-label="Накладная"><FormIcon word="ННКЛ" /></ToolButton>
          <ToolButton aria-label="Кассовый ордер"><FormIcon word="ПКО" /></ToolButton>
          <Divider />
          <Tool name="bag" label="Деньги" />
          <Tool name="safe" label="Касса" />
          <Tool name="cyanDoc" label="Документ" />
          <Tool name="people" label="Контрагенты" />
          <Divider />
          <Tool name="yellowBox" label="Товары" />
          <Tool name="train" label="Поставки" />
          <Tool name="report" label="Отчет" />
          <Tool name="chart" label="График" />
          <Divider />
          <Tool name="globe" label="Интернет" />
          <Tool name="day26" label="Дата" />
          <Divider />
          <Tool name="desk" label="Рабочее место" />
        </ToolBar>
      </ToolRow>
      <PlainBar>
        <Tool name="expand" label="Развернуть" />
        <Tool name="collapse" label="Свернуть" />
        <Tool name="question" label="Описание формы" />
        <Tool name="whatsThis" label="Что это" />
      </PlainBar>

      <Panel>
        <Tabs role="tablist">
          <Tab role="tab" aria-selected $active>Настройка</Tab>
          <Tab role="tab" aria-selected={false}>Печать</Tab>
          <TabRule />
        </Tabs>
        <Body>
          <Pickers>
            <Picker $w={337} $gap={3}>
              <Label $inset={2} htmlFor="goods">Группа товара для печати этикеток:</Label>
              <FieldRow>
                <Field id="goods" defaultValue={'ОАО "Молодечненский молочный комбинат"'} />
                <DotsButton>...</DotsButton>
                <ClearButton aria-label="Очистить группу"><Cross /></ClearButton>
              </FieldRow>
            </Picker>
            <Picker $w={186} $gap={7}>
              <Label htmlFor="firm">Фирма для печати этикеток:</Label>
              <FieldRow $lead={3}>
                <Field id="firm" defaultValue="ИП Корольков И.В." />
                <DotsButton>...</DotsButton>
                <ClearButton $focus aria-label="Очистить фирму"><Cross /></ClearButton>
              </FieldRow>
            </Picker>
          </Pickers>
          <UnitRow>
            <Units>
              <Choice><Radio name="unit" defaultChecked />Использовать базовую единичу измерения</Choice>
              <Choice><Radio name="unit" />Использовать основную единицу измерения</Choice>
            </Units>
            <PushButton $w={241} $h={24}>С<u>ф</u>ормировать список для выбора</PushButton>
          </UnitRow>

          <Group>
            <Legend>Начальное количество этикеток:</Legend>
            <QuantityRow>
              <Choice><Radio name="qty" defaultChecked />По текущим остаткам товара на:</Choice>
              <DateBox id="rest" width={119} white label="Дата остатков" />
            </QuantityRow>
            <QuantityRow>
              <Choice><Radio name="qty" />Фиксированное количество:</Choice>
              <FieldRow><Field $right defaultValue="0" aria-label="Количество" /></FieldRow>
            </QuantityRow>
            <ArrivalRow>
              <Choice><Radio name="qty" />По поступлению товар.</Choice>
            </ArrivalRow>
            <PeriodRow>
              <PeriodWord htmlFor="from">С:</PeriodWord>
              <DateBox id="from" width={124} />
              <PeriodWord htmlFor="to">по:</PeriodWord>
              <DateBox id="to" width={123} />
              <PushButton $w={34} $h={23}>...</PushButton>
            </PeriodRow>
          </Group>

          <Prices>
            <PriceFrame>
              <PriceTable>
                <thead>
                  <tr><HeadCell $mark>Пометка</HeadCell><HeadCell>Тип цены</HeadCell></tr>
                </thead>
                <tbody>
                  {prices.map(([name, on], i) => (
                    <tr key={name}>
                      <MarkCell $current={i === 3}>
                        <TickBox>
                          <Tick defaultChecked={on} $current={i === 3} aria-label={name} />
                          <svg width="11" height="11"><path d="M2 5l2 3 5-5" fill="none" stroke="#000" strokeWidth="2" /></svg>
                        </TickBox>
                      </MarkCell>
                      <NameCell>{name}</NameCell>
                    </tr>
                  ))}
                </tbody>
              </PriceTable>
              <ScrollTrack>
                <ScrollButton aria-label="Вверх"><svg width="8" height="4"><path d="M0 4h8L4 0z" /></svg></ScrollButton>
                <ScrollGap $grow={1} />
                <ScrollButton aria-label="Ползунок" />
                <ScrollGap $grow={9} />
                <ScrollButton aria-label="Вниз"><svg width="8" height="4"><path d="M0 0h8L4 4z" /></svg></ScrollButton>
              </ScrollTrack>
            </PriceFrame>
            <SideButtons>
              <SideButton aria-label="Отметить все"><MarkGlyph columns={1} checks="M2.500 3v2.500l2-2.500M2.500 10v2.500l2-2.500" /></SideButton>
              <SideButton aria-label="Обратить отметки"><MarkGlyph columns={2} checks="M2.500 3v2.500l2-2.500M8.500 10v2.500l2-2.500" /></SideButton>
              <SideButton aria-label="Снять отметки"><MarkGlyph columns={1} checks="" /></SideButton>
            </SideButtons>
          </Prices>
          <Footer><PushButton $w={82} $h={24}>Закрыть</PushButton></Footer>
        </Body>
      </Panel>

      <WindowBar>
        <WindowButton $active><SigmaDoc />Fractal MSCM: Печать э...</WindowButton>
        <WindowButton>
          <Px>
            <path d="M4 1h7l3 3v11H4z" fill="#fff" stroke="#000" />
            <text x="0" y="13" fontSize="14" fontWeight="bold" fill="#d01018" fontFamily="Liberation Sans">A</text>
          </Px>
          Таблица  *
        </WindowButton>
      </WindowBar>
      <StatusBar>
        <Hint>Для получения подсказки нажмите F1</Hint>
        <StatusCell $w={26} />
        <StatusCell $w={28}>NUM</StatusCell>
        <StatusCell $w={150}>ТА: 28.11.17  00:00:00</StatusCell>
        <StatusCell $w={152}>БИ: 4 квартал 2017 г.</StatusCell>
        <StatusCell $w={151}>ТП:</StatusCell>
      </StatusBar>

      <TaskBar>
        <StartButton><WindowsFlag />Пуск</StartButton>
        <TaskGrip $gap={7} />
        <Apps>
          <AppButton $state="stack" aria-label="Проводник"><Explorer /></AppButton>
          <AppButton aria-label="Диспетчер сервера"><Server /></AppButton>
          <AppButton aria-label="PowerShell"><PowerShell /></AppButton>
          <AppButton aria-label="Firefox"><Firefox /></AppButton>
          <AppButton aria-label="Access"><RedA /></AppButton>
          <AppButton $state="open" aria-label="Chrome"><Chrome /></AppButton>
          <AppButton aria-label="Удаленный рабочий стол"><Remote /></AppButton>
          <AppButton aria-label="Агент"><AtMail /></AppButton>
          <AppButton $state="open" aria-label="PuTTY"><Putty /></AppButton>
          <AppButton $state="stack" aria-label="1С"><OneC /></AppButton>
          <AppButton $state="active" aria-label="1С 7.7"><OneC7 /></AppButton>
        </Apps>
        <TaskGrip $gap={4} />
        <TrayWord>Ссылки</TrayWord>
        <TaskGrip $gap={7} />
        <TrayWord>RU</TrayWord>
        <TaskGrip $gap={3} />
        <Tray>
          <svg width="7" height="10"><path d="M1 4l2.500-3L6 4M1 9l2.500-3L6 9" fill="none" stroke="#000" strokeWidth="1.500" /></svg>
          <Px s={17}>
            <path d="M5 3h10v9H5zM7 15h7M10 12v3" fill="#ddd" stroke="#707070" />
            <path d="M1 1v3h4V1M3 4v10h3" fill="none" stroke="#505050" />
          </Px>
          <Px s={16}>
            <path d="M2 1v14" stroke="#707070" strokeWidth="1.500" />
            <path d="M3 2h6l1 2h5l-2 3 1 3H9L8 8H3z" fill="#f4f4f4" stroke="#808080" />
          </Px>
          <Px s={16} v={17}>
            <path d="M1 6h3l4-4v13l-4-4H1z" fill="#eee" stroke="#808080" />
            <path d="M10 6q2 3 0 5M12 4q3 5 0 9M14 2q4 7 0 13" fill="none" stroke="#999" />
          </Px>
          <Clock>18:52<br />28.11.2017</Clock>
          <Px s={17}>
            <path d="M0 2h15v11H0z" fill="#2868b8" stroke="#183860" />
            <path d="M1 3h13L1 10z" fill="#58a0e0" />
            <path d="M3 14h9" stroke="#404040" />
          </Px>
        </Tray>
      </TaskBar>
    </Screen>
  );
}
